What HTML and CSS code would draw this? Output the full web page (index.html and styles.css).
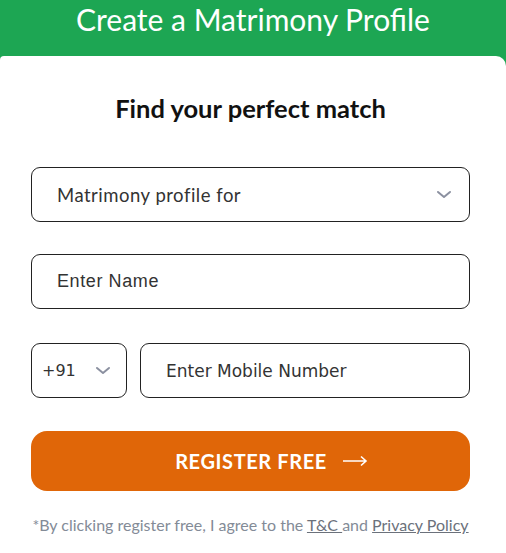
FILE: index.html
```html
<!DOCTYPE html>
<html lang="en">
<head>
    <meta charset="UTF-8">
    <meta name="viewport" content="width=device-width, initial-scale=1.0">
    <title>Create a Matrimony Profile</title>
    <link rel="stylesheet" href="styles.css">
</head>
<body>
    <div class="top_bar">
        Create a Matrimony Profile
    </div>
    <div class="card">
        <h2 class="title">Find your perfect match</h2>
        <form name="form1" method="get" action="">
            <div class="field select_box">
                <span>Matrimony profile for</span>
                <svg class="chev" width="16" height="10" viewBox="0 0 16 10"><path d="M2 2 L8 7 L14 2" fill="none" stroke="#8b90a0" stroke-width="2" stroke-linecap="round" stroke-linejoin="round"/></svg>
            </div>
            <div class="field name_box">
                <span>Enter Name</span>
            </div>
            <div class="phone_row">
                <div class="field code_box">
                    <span>+91</span>
                    <svg class="chev" width="16" height="10" viewBox="0 0 16 10"><path d="M2 2 L8 7 L14 2" fill="none" stroke="#8b90a0" stroke-width="2" stroke-linecap="round" stroke-linejoin="round"/></svg>
                </div>
                <div class="field mobile_box">
                    <span>Enter Mobile Number</span>
                </div>
            </div>
            <button type="button" class="btn_register">
                REGISTER FREE
                <svg width="26" height="12" viewBox="0 0 26 12"><path d="M1 6 H24 M19 1.5 L24 6 L19 10.5" fill="none" stroke="#fff" stroke-width="1.6"/></svg>
            </button>
        </form>
        <p class="terms">*By clicking register free, I agree to the <a href="#">T&amp;C </a>and <a href="#">Privacy Policy</a></p>
    </div>
</body>
</html>
```

FILE: styles.css
```css
body
{
    margin: 0;
    background-color: #1da653;
    font-family: Lato, "Liberation Sans", sans-serif;
    overflow: hidden;
}
.top_bar
{
    height: 56px;
    box-sizing: border-box;
    padding-top: 1px;
    color: white;
    font-size: 30px;
    line-height: 36px;
    text-align: center;
}
.card
{
    background-color: white;
    border-radius: 4px 10px 0 0;
    height: 497px;
    padding: 37px 36px 0 31px;
    box-sizing: border-box;
}
.title
{
    margin: 0 0 44px 0;
    font-size: 25.5px;
    font-weight: bold;
    line-height: 30px;
    text-align: center;
    color: #111;
}
.field
{
    border: 1px solid #222;
    border-radius: 9px;
    height: 55px;
    box-sizing: border-box;
    display: flex;
    align-items: center;
    color: #333;
    font-size: 16px;
}
.select_box
{
    padding: 0 17px 0 25px;
    justify-content: space-between;
    margin-bottom: 32px;
    font-size: 18.5px;
    letter-spacing: 0.5px;
}
.name_box
{
    padding-left: 25px;
    font-family: "Liberation Sans", Arial, sans-serif;
    font-size: 18px;
    letter-spacing: 0.6px;
    margin-bottom: 34px;
}
.phone_row
{
    display: flex;
    gap: 13px;
    margin-bottom: 33px;
}
.code_box
{
    width: 96px;
    padding: 0 15px 0 10px;
    justify-content: space-between;
    font-family: Tahoma, "DejaVu Sans", sans-serif;
    font-size: 16px;
}
.mobile_box
{
    flex: 1;
    padding-left: 25px;
    font-family: "DejaVu Sans", Verdana, sans-serif;
    font-size: 17px;
}
.btn_register
{
    width: 100%;
    height: 60px;
    border: none;
    border-radius: 16px;
    background-color: #e06608;
    color: white;
    font-family: Lato, sans-serif;
    font-size: 20px;
    font-weight: bold;
    letter-spacing: 0.6px;
    display: flex;
    align-items: center;
    justify-content: center;
    gap: 15px;
    padding-left: 48px;
}
.terms
{
    margin: 24px 0 0 0;
    font-size: 16px;
    color: #838b97;
    text-align: center;
    white-space: nowrap;
}
.terms a
{
    color: #6b717b;
}
```
